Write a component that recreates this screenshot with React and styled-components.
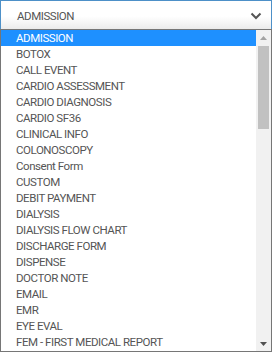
import styled, { createGlobalStyle } from 'styled-components'

const GlobalStyle = createGlobalStyle`
	html, body {
		margin: 0;
		padding: 0;
		background: #fff;
	}
`

const OPTIONS = [
	'ADMISSION',
	'BOTOX',
	'CALL EVENT',
	'CARDIO ASSESSMENT',
	'CARDIO DIAGNOSIS',
	'CARDIO SF36',
	'CLINICAL INFO',
	'COLONOSCOPY',
	'Consent Form',
	'CUSTOM',
	'DEBIT PAYMENT',
	'DIALYSIS',
	'DIALYSIS FLOW CHART',
	'DISCHARGE FORM',
	'DISPENSE',
	'DOCTOR NOTE',
	'EMAIL',
	'EMR',
	'EYE EVAL',
	'FEM - FIRST MEDICAL REPORT',
]

const Wrapper = styled.div`
	width: 272px;
	height: 352px;
	display: flex;
	flex-direction: column;
	font-family: Roboto, 'Liberation Sans', sans-serif;
	font-size: 11.5px;
	letter-spacing: -0.45px;
	color: #555;
`

const SelectBox = styled.div`
	box-sizing: border-box;
	height: 29px;
	border: 1px solid #4d90c8;
	border-bottom: none;
	background: linear-gradient(#fff 0%, #fff 55%, #ebebeb 100%);
	display: flex;
	align-items: center;
	justify-content: space-between;
	padding: 1px 9px 0 16px;
`

const Dropdown = styled.div`
	flex: 1;
	display: flex;
	border: 1px solid #767676;
	min-height: 0;
`

const List = styled.ul`
	flex: 1;
	margin: 0;
	padding: 0;
	list-style: none;
`

const Item = styled.li`
	height: 16px;
	line-height: 17px;
	padding-left: 15px;
	white-space: nowrap;
	background: ${({ $active }) => ($active ? '#1e90ff' : 'transparent')};
	color: ${({ $active }) => ($active ? '#fff' : '#555')};
`

const Scrollbar = styled.div`
	width: 15px;
	background: #f1f1f1;
	display: flex;
	flex-direction: column;
`

const Arrow = styled.div`
	height: 15px;
	display: flex;
	align-items: center;
	justify-content: center;
`

const Track = styled.div`
	flex: 1;
	padding: 1px 2px;
`

const Thumb = styled.div`
	height: 83px;
	background: #c1c1c1;
`

const Chevron = () => (
	<svg width="12" height="8" viewBox="0 0 12 8">
		<path d="M1.5 1.5 L6 6 L10.5 1.5" fill="none" stroke="#555" strokeWidth="2" />
	</svg>
)

const Triangle = ({ up }) => (
	<svg width="7" height="4" viewBox="0 0 7 4">
		<path d={up ? 'M0 4 L3.5 0 L7 4 Z' : 'M0 0 L3.5 4 L7 0 Z'} fill={up ? '#a3a3a3' : '#505050'} />
	</svg>
)

export default function App() {
	return (
		<Wrapper>
			<GlobalStyle />
			<SelectBox>
				<span>ADMISSION</span>
				<Chevron />
			</SelectBox>
			<Dropdown>
				<List>
					{OPTIONS.map((name, i) => (
						<Item key={name} $active={i === 0}>
							{name}
						</Item>
					))}
				</List>
				<Scrollbar>
					<Arrow>
						<Triangle up />
					</Arrow>
					<Track>
						<Thumb />
					</Track>
					<Arrow>
						<Triangle />
					</Arrow>
				</Scrollbar>
			</Dropdown>
		</Wrapper>
	)
}
